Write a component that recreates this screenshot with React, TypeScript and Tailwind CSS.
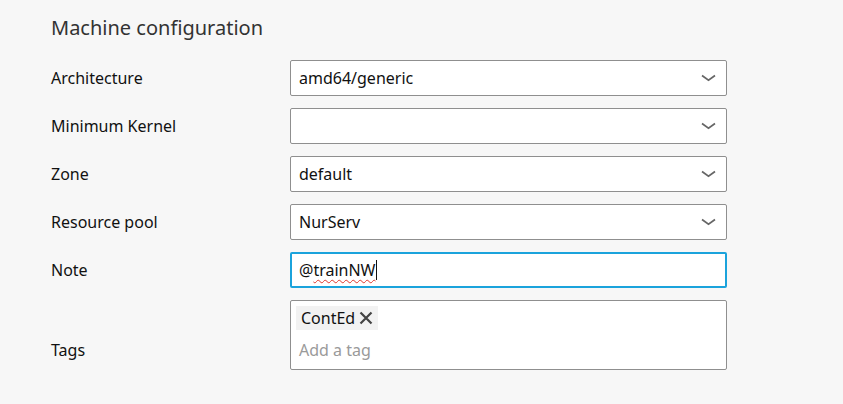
import React from "react";

const Chevron = () => (
  <svg width="15" height="8" viewBox="0 0 15 8" className="shrink-0">
    <path d="M1 1.5 L7.5 6.2 L14 1.5" fill="none" stroke="#666" strokeWidth="1.7" />
  </svg>
);

const SelectRow = ({ label, value }: { label: string; value: string }) => (
  <div className="flex items-center h-9">
    <div className="w-[239px] text-[16px] text-[#111]">{label}</div>
    <div className="w-[437px] h-9 bg-white border border-[#8f8f8f] rounded-[2px] flex items-center justify-between pl-2 pr-[10px] text-[16px] text-[#111]">
      <span>{value}</span>
      <Chevron />
    </div>
  </div>
);

export default function App() {
  return (
    <div
      className="w-[843px] h-[404px] bg-[#f7f7f7] pl-[51px] pt-[14px]"
      style={{ fontFamily: '"Noto Sans", sans-serif' }}
    >
      <div className="text-[20px] leading-[28px] text-[#333]">Machine configuration</div>
      <div className="flex flex-col gap-3 mt-[18px]">
        <SelectRow label="Architecture" value="amd64/generic" />
        <SelectRow label="Minimum Kernel" value="" />
        <SelectRow label="Zone" value="default" />
        <SelectRow label="Resource pool" value="NurServ" />
        <div className="flex items-center h-9">
          <div className="w-[239px] text-[16px] text-[#111]">Note</div>
          <div className="w-[437px] h-9 bg-white border-2 border-[#1ba3dc] rounded-[2px] flex items-center pl-[7px] text-[16px] text-[#111]">
            <span>@</span>
            <span className="underline decoration-wavy decoration-[#e0362c] decoration-1 underline-offset-[3px]">trainNW</span>
            <span className="w-px h-[20px] bg-[#111]" />
          </div>
        </div>
        <div className="flex items-end">
          <div className="w-[239px] text-[16px] text-[#111] pb-[8px]">Tags</div>
          <div className="w-[437px] h-[70px] bg-white border border-[#8f8f8f] rounded-[2px] flex flex-col px-[5px] pt-[5px]">
            <div className="self-start bg-[#f2f2f2] h-[24px] flex items-center pl-[5px] pr-[4px] gap-[3px] text-[16px] text-[#111]">
              <span>ContEd</span>
              <svg width="16" height="16" viewBox="0 0 16 16">
                <path d="M2.5 2.5 L13.5 13.5 M13.5 2.5 L2.5 13.5" stroke="#444" strokeWidth="2.2" />
              </svg>
            </div>
            <div className="pl-[3px] mt-[8px] text-[16px] text-[#9a9a9a]">Add a tag</div>
          </div>
        </div>
      </div>
    </div>
  );
}
